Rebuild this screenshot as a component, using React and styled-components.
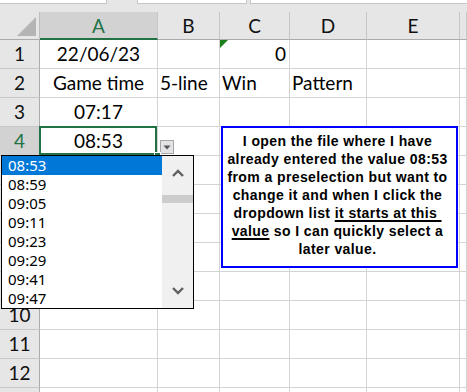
import React from "react";
import styled, { createGlobalStyle, css } from "styled-components";

const Global = createGlobalStyle`
  html, body { margin: 0; padding: 0; background: #ffffff; }
  body { font-family: Lato, "Liberation Sans", sans-serif; }
  * { box-sizing: border-box; }
`;

const GRID = "#d4d4d4";
const HEAD = "#e6e6e6";
const HEAD_ACTIVE = "#d2d2d2";
const GREEN = "#217346";

const Sheet = styled.div`
  position: relative;
  width: 467px;
  height: 392px;
  overflow: hidden;
  background: #ffffff;
`;

const FormulaStrip = styled.div`
  display: flex;
  height: 12px;
  background: ${HEAD};
`;

const FormulaBox = styled.div`
  height: 4px;
  background: #ffffff;
  border-bottom: 1px solid #c6c6c6;
  border-left: ${(p) => (p.$first ? "none" : "1px solid #c6c6c6")};
  border-right: ${(p) => (p.$last ? "none" : "1px solid #c6c6c6")};
  width: ${(p) => (p.$w ? `${p.$w}px` : "auto")};
  flex: ${(p) => (p.$w ? "none" : "1")};
  margin-left: ${(p) => p.$gap || 0}px;
`;

const Grid = styled.div`
  display: grid;
  grid-template-columns: 40px 118px 62px 70px 77px 93px 1fr;
  grid-template-rows: 28px;
  grid-auto-rows: 29px;
  font-family: Lato, "Liberation Sans", sans-serif;
  font-size: 19px;
  color: #000;
`;

const Corner = styled.div`
  background: ${HEAD};
  border-right: 1px solid #bdbdbd;
  border-bottom: 1px solid #ababab;
  display: flex;
  align-items: flex-end;
  justify-content: flex-end;
  svg { display: block; }
`;

const ColHeader = styled.div`
  background: ${(p) => (p.$active ? HEAD_ACTIVE : HEAD)};
  color: ${(p) => (p.$active ? GREEN : "#111")};
  border-right: 1px solid #c6c6c6;
  border-bottom: ${(p) => (p.$active ? `2px solid ${GREEN}` : "1px solid #ababab")};
  display: flex;
  align-items: center;
  justify-content: center;
  line-height: 27px;
`;

const RowHeader = styled.div`
  background: ${(p) => (p.$active ? HEAD_ACTIVE : HEAD)};
  color: ${(p) => (p.$active ? GREEN : "#111")};
  border-right: 1px solid #ababab;
  border-bottom: 1px solid #c8c8c8;
  display: flex;
  align-items: center;
  justify-content: center;
  line-height: 28px;
`;

const Cell = styled.div`
  position: relative;
  border-right: 1px solid ${GRID};
  border-bottom: 1px solid ${GRID};
  display: flex;
  align-items: center;
  justify-content: ${(p) =>
    p.$align === "center" ? "center" : p.$align === "right" ? "flex-end" : "flex-start"};
  padding: 0 ${(p) => (p.$align === "right" ? "3px" : "0")} 0 ${(p) => (p.$align === "left" ? "2px" : "0")};
  line-height: 28px;
  white-space: nowrap;
  ${(p) =>
    p.$active &&
    css`
      &::after {
        content: "";
        position: absolute;
        left: -1px;
        top: -1px;
        right: 0;
        bottom: 0;
        border: 2px solid ${GREEN};
        pointer-events: none;
      }
      &::before {
        content: "";
        position: absolute;
        right: -3px;
        bottom: -3px;
        width: 5px;
        height: 5px;
        background: ${GREEN};
        outline: 1px solid #fff;
        z-index: 1;
      }
    `}
`;

const ErrorMark = styled.span`
  position: absolute;
  left: 0;
  top: 0;
  width: 0;
  height: 0;
  border-top: 8px solid #1b7f1b;
  border-right: 8px solid transparent;
`;

const DropButton = styled.div`
  position: absolute;
  left: 160px;
  top: 140px;
  width: 14px;
  height: 14px;
  background: #e3e3e6;
  border: 1px solid #a6a6a6;
  display: flex;
  align-items: center;
  justify-content: center;
  svg { display: block; }
`;

const DropList = styled.div`
  position: absolute;
  left: 1px;
  top: 155px;
  width: 193px;
  height: 154px;
  border: 1px solid #000;
  background: #fff;
  display: flex;
  z-index: 3;
`;

const Items = styled.div`
  width: 160px;
  display: flex;
  flex-direction: column;
`;

const Item = styled.div`
  height: 19px;
  line-height: 19px;
  padding-left: 6px;
  font-family: "Noto Sans", "Open Sans", sans-serif;
  font-size: 15px;
  color: ${(p) => (p.$selected ? "#ffffff" : "#000")};
  background: ${(p) => (p.$selected ? "#0078d7" : "transparent")};
`;

const ScrollBar = styled.div`
  width: 31px;
  background: #f0f0f0;
  display: flex;
  flex-direction: column;
`;

const ScrollArrow = styled.div`
  height: 34px;
  display: flex;
  align-items: center;
  justify-content: center;
  svg { display: block; }
`;

const ScrollTrack = styled.div`
  flex: 1;
  display: flex;
  flex-direction: column;
  padding-top: 5px;
`;

const ScrollThumb = styled.div`
  height: 8px;
  background: #cdcdcd;
`;

const NoteBox = styled.div`
  position: absolute;
  left: 221px;
  top: 126px;
  width: 237px;
  height: 142px;
  border: 2px solid #0000ff;
  background: #fff;
  padding: 4px 4px 0 0;
  display: flex;
  flex-direction: column;
  align-items: center;
  font-family: "Liberation Sans", Arial, sans-serif;
  font-weight: 700;
  font-size: 14px;
  letter-spacing: 0.4px;
  line-height: 18px;
  color: #000;
  z-index: 2;
`;

const NoteLine = styled.div`
  white-space: pre;
`;

const Under = styled.span`
  text-decoration: underline;
  text-decoration-thickness: 2px;
  text-underline-offset: 2px;
`;

const Chevron = ({ up }) => (
  <svg width="12" height="8" viewBox="0 0 12 8">
    <polyline
      points={up ? "1,7 6,2 11,7" : "1,1 6,6 11,1"}
      fill="none"
      stroke="#606060"
      strokeWidth="2.4"
    />
  </svg>
);

const cols = ["A", "B", "C", "D", "E", ""];

const data = {
  1: { A: { t: "22/06/23", a: "center" }, C: { t: "0", a: "right", mark: true } },
  2: {
    A: { t: "Game time", a: "center" },
    B: { t: "5-line", a: "left" },
    C: { t: "Win", a: "left" },
    D: { t: "Pattern", a: "left" },
  },
  3: { A: { t: "07:17", a: "center" } },
  4: { A: { t: "08:53", a: "center", active: true } },
};

const times = ["08:53", "08:59", "09:05", "09:11", "09:23", "09:29", "09:41", "09:47"];

export default function App() {
  const rows = Array.from({ length: 13 }, (_, i) => i + 1);
  return (
    <>
      <Global />
      <Sheet>
        <FormulaStrip>
          <FormulaBox $first $w={107} />
          <FormulaBox $w={110} $gap={30} />
          <FormulaBox $last $gap={3} />
        </FormulaStrip>
        <Grid>
          <Corner>
            <svg width="39" height="27" viewBox="0 0 39 27">
              <polygon points="17,24 36,24 36,5" fill="#b4b4b4" />
            </svg>
          </Corner>
          {cols.map((c, i) => (
            <ColHeader key={i} $active={c === "A"}>
              {c}
            </ColHeader>
          ))}
          {rows.map((r) => (
            <React.Fragment key={r}>
              <RowHeader $active={r === 4}>{r <= 12 ? r : ""}</RowHeader>
              {cols.map((c, i) => {
                const d = (data[r] && data[r][c]) || {};
                return (
                  <Cell key={i} $align={d.a} $active={d.active}>
                    {d.mark && <ErrorMark />}
                    {d.t}
                  </Cell>
                );
              })}
            </React.Fragment>
          ))}
        </Grid>

        <DropButton>
          <svg width="8" height="5" viewBox="0 0 8 5">
            <polygon points="0.5,0.5 7.5,0.5 4,4.5" fill="#555" />
          </svg>
        </DropButton>

        <DropList>
          <Items>
            {times.map((t, i) => (
              <Item key={t} $selected={i === 0}>
                {t}
              </Item>
            ))}
          </Items>
          <ScrollBar>
            <ScrollArrow>
              <Chevron up />
            </ScrollArrow>
            <ScrollTrack>
              <ScrollThumb />
            </ScrollTrack>
            <ScrollArrow>
              <Chevron />
            </ScrollArrow>
          </ScrollBar>
        </DropList>

        <NoteBox>
          <NoteLine>I open the file where I have</NoteLine>
          <NoteLine>already entered the value 08:53</NoteLine>
          <NoteLine>from a preselection but want to</NoteLine>
          <NoteLine>change it and when I click the</NoteLine>
          <NoteLine>
            dropdown list <Under>it starts at this </Under>
          </NoteLine>
          <NoteLine>
            <Under>value</Under> so I can quickly select a
          </NoteLine>
          <NoteLine>later value.</NoteLine>
        </NoteBox>
      </Sheet>
    </>
  );
}
